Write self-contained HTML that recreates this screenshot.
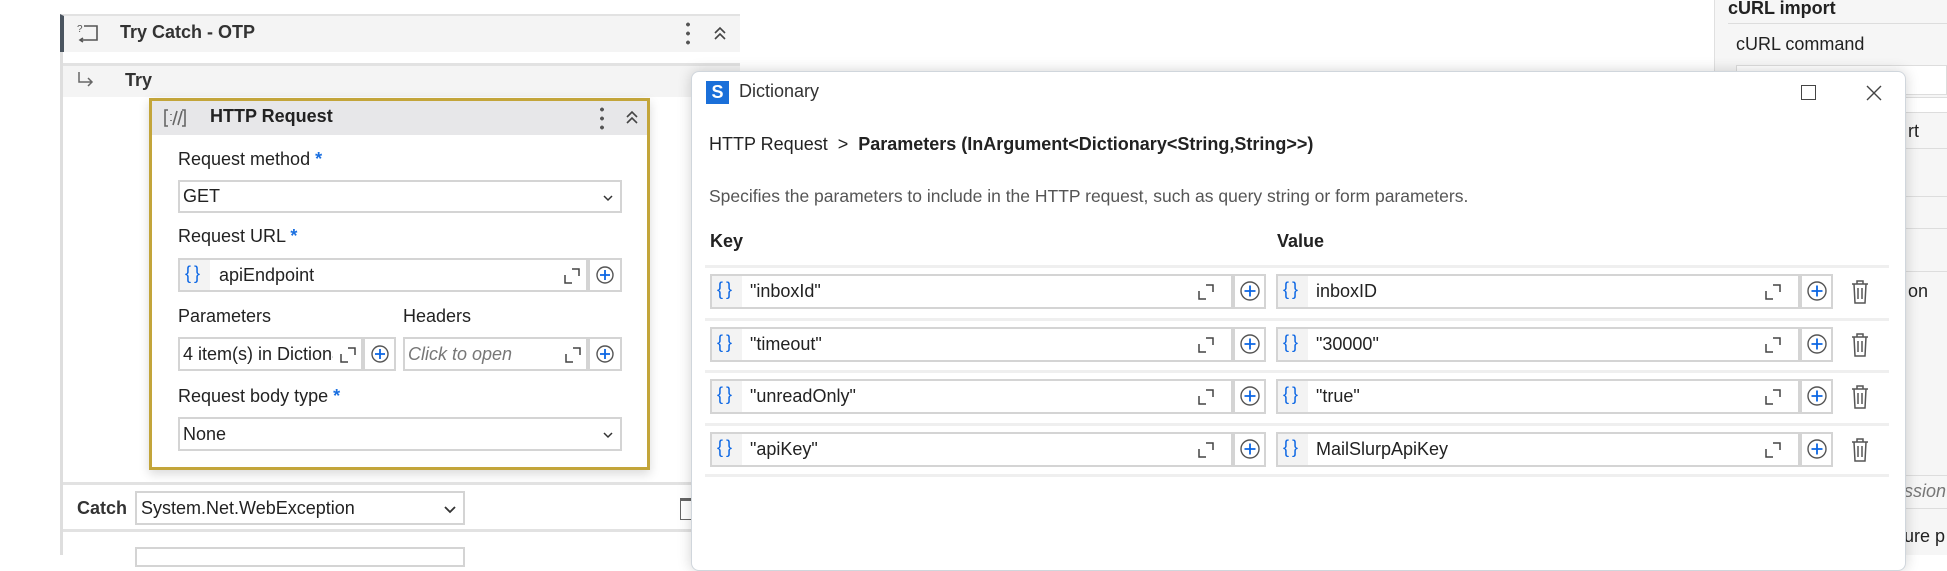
<!DOCTYPE html>
<html><head><meta charset="utf-8"><style>
*{box-sizing:border-box;margin:0;padding:0}
body{width:1947px;height:555px;overflow:hidden;background:#fff;font-family:"Liberation Sans",sans-serif;color:#222;position:relative;font-size:16px}
.a{position:absolute}
.inp{position:absolute;border:2px solid #d4d4d4;background:#fff}
.lbl{position:absolute;font-size:18px;color:#222}
.star{color:#1a6fe0;font-weight:bold}
.br{color:#0b66e4;font-size:18px;letter-spacing:3px}
.plus{position:absolute;border:2px solid #d4d4d4;background:#fff}
.dv{position:absolute;height:3px;background:#efefef}
</style></head><body>

<!-- left workflow panel -->
<div class="a" style="left:60px;top:14px;width:680px;height:541px;border-left:3px solid #dedede;background:#fff"></div>
<div class="a" style="left:60px;top:14px;width:680px;height:38px;background:#f4f4f4;border-left:4px solid #4b5560;border-top:2px solid #e2e2e2"></div>
<svg class="a" style="left:75px;top:22px" width="26" height="24" viewBox="0 0 26 24"><path d="M9 4h13v14H6" fill="none" stroke="#555" stroke-width="1.6"/><path d="M8 20l-3-2 3-2" fill="none" stroke="#555" stroke-width="1.6"/><text x="2" y="10" font-size="10" fill="#555" font-family="Liberation Sans">?</text></svg>
<div class="a" style="left:120px;top:22px;font-size:18px;font-weight:bold;color:#333">Try Catch - OTP</div>
<div class="a" style="left:686px;top:20px;width:4px;height:28px;background:radial-gradient(circle,#555 1.8px,transparent 2px) 0 0/4px 9px"></div>
<svg class="a" style="left:712px;top:24px" width="16" height="18"><path d="M3 9l5-5 5 5M3 15l5-5 5 5" fill="none" stroke="#444" stroke-width="1.6"/></svg>
<div class="a" style="left:63px;top:63px;width:677px;height:34px;background:#f4f4f4;border-top:3px solid #e2e2e2"></div>
<svg class="a" style="left:76px;top:70px" width="20" height="18"><path d="M3 2v10h13M12 8l4 4-4 4" fill="none" stroke="#666" stroke-width="1.5"/></svg>
<div class="a" style="left:125px;top:70px;font-size:18px;font-weight:bold;color:#333">Try</div>

<!-- HTTP card -->
<div class="a" style="left:149px;top:98px;width:501px;height:372px;border:3px solid #c3a53a;background:#fff;box-shadow:0 4px 10px rgba(0,0,0,.15)"></div>
<div class="a" style="left:152px;top:101px;width:495px;height:34px;background:#e7e7e9"></div>
<svg class="a" style="left:163px;top:108px" width="24" height="20"><path d="M5 2H2v16h3M19 2h3v16h-3" fill="none" stroke="#666" stroke-width="1.6"/><path d="M8 6v1M8 12v1M14 3l-4 14M19 3l-4 14" stroke="#666" stroke-width="1.6"/></svg>
<div class="a" style="left:210px;top:106px;font-size:18px;font-weight:bold;color:#222">HTTP Request</div>
<div class="a" style="left:600px;top:105px;width:4px;height:26px;background:radial-gradient(circle,#555 1.8px,transparent 2px) 0 0/4px 9px"></div>
<svg class="a" style="left:624px;top:108px" width="16" height="18"><path d="M3 9l5-5 5 5M3 15l5-5 5 5" fill="none" stroke="#444" stroke-width="1.6"/></svg>

<div class="lbl" style="left:178px;top:149px">Request method <span class="star">*</span></div>
<div class="inp" style="left:178px;top:180px;width:444px;height:33px"></div>
<div class="a" style="left:183px;top:186px;font-size:18px">GET</div>
<svg class="a" style="left:603px;top:194px" width="10" height="8"><path d="M1 2l4 4 4-4" fill="none" stroke="#333" stroke-width="1.5"/></svg>

<div class="lbl" style="left:178px;top:226px">Request URL <span class="star">*</span></div>
<div class="inp" style="left:178px;top:258px;width:410px;height:34px"></div>
<div class="a" style="left:180px;top:260px;width:30px;height:30px;background:#f3f3f3"></div>
<div class="a br" style="left:185px;top:263px">{}</div>
<div class="a" style="left:219px;top:265px;font-size:18px">apiEndpoint</div>
<svg class="a" style="left:564px;top:268px" width="16" height="16"><path d="M1 7v8h7M8 1h7v7" fill="none" stroke="#444" stroke-width="1.5"/></svg>
<div class="plus" style="left:588px;top:258px;width:34px;height:34px"></div>
<svg class="a" style="left:596px;top:266px" width="18" height="18"><circle cx="9" cy="9" r="8" fill="none" stroke="#555" stroke-width="1.4"/><path d="M9 4v10M4 9h10" stroke="#0b66e4" stroke-width="1.8"/></svg>

<div class="lbl" style="left:178px;top:306px">Parameters</div>
<div class="lbl" style="left:403px;top:306px">Headers</div>
<div class="inp" style="left:178px;top:337px;width:185px;height:34px"></div>
<div class="a" style="left:183px;top:344px;font-size:18px;width:150px;overflow:hidden;white-space:nowrap">4 item(s) in Dictionary</div>
<svg class="a" style="left:340px;top:347px" width="16" height="16"><path d="M1 7v8h7M8 1h7v7" fill="none" stroke="#444" stroke-width="1.5"/></svg>
<div class="plus" style="left:363px;top:337px;width:33px;height:34px"></div>
<svg class="a" style="left:371px;top:345px" width="18" height="18"><circle cx="9" cy="9" r="8" fill="none" stroke="#555" stroke-width="1.4"/><path d="M9 4v10M4 9h10" stroke="#0b66e4" stroke-width="1.8"/></svg>
<div class="inp" style="left:403px;top:337px;width:185px;height:34px"></div>
<div class="a" style="left:408px;top:344px;font-size:18px;font-style:italic;color:#777">Click to open</div>
<svg class="a" style="left:565px;top:347px" width="16" height="16"><path d="M1 7v8h7M8 1h7v7" fill="none" stroke="#444" stroke-width="1.5"/></svg>
<div class="plus" style="left:588px;top:337px;width:34px;height:34px"></div>
<svg class="a" style="left:596px;top:345px" width="18" height="18"><circle cx="9" cy="9" r="8" fill="none" stroke="#555" stroke-width="1.4"/><path d="M9 4v10M4 9h10" stroke="#0b66e4" stroke-width="1.8"/></svg>

<div class="lbl" style="left:178px;top:386px">Request body type <span class="star">*</span></div>
<div class="inp" style="left:178px;top:417px;width:444px;height:34px"></div>
<div class="a" style="left:183px;top:424px;font-size:18px">None</div>
<svg class="a" style="left:603px;top:431px" width="10" height="8"><path d="M1 2l4 4 4-4" fill="none" stroke="#333" stroke-width="1.5"/></svg>

<div class="a" style="left:63px;top:482px;width:677px;height:3px;background:#e2e2e2"></div>
<div class="a" style="left:77px;top:498px;font-size:18px;font-weight:bold;color:#333">Catch</div>
<div class="inp" style="left:135px;top:491px;width:330px;height:34px"></div>
<div class="a" style="left:141px;top:498px;font-size:18px">System.Net.WebException</div>
<svg class="a" style="left:444px;top:505px" width="12" height="9"><path d="M1 2l5 5 5-5" fill="none" stroke="#333" stroke-width="1.8"/></svg>
<div class="a" style="left:680px;top:498px;width:12px;height:22px;border:1.5px solid #666;border-top:3px solid #666"></div>
<div class="a" style="left:63px;top:529px;width:677px;height:3px;background:#e2e2e2"></div>
<div class="inp" style="left:135px;top:547px;width:330px;height:20px"></div>

<!-- right panel -->
<div class="a" style="left:1714px;top:0;width:233px;height:555px;background:#f6f6f6;border-left:1px solid #e0e0e0"></div>
<div class="a" style="left:1728px;top:-2px;font-size:18px;font-weight:bold;color:#222">cURL import</div>
<div class="a" style="left:1728px;top:23px;width:219px;height:1px;background:#ddd"></div>
<div class="a" style="left:1736px;top:34px;font-size:18px;color:#222">cURL command</div>
<div class="a" style="left:1736px;top:65px;width:211px;height:30px;border:1px solid #ddd;background:#fff"></div>
<div class="a" style="left:1906px;top:97px;width:41px;height:16px;background:#fff;border-top:1px solid #ddd;border-bottom:1px solid #ddd"></div>
<div class="a" style="left:1906px;top:148px;width:41px;height:1px;background:#ddd"></div>
<div class="a" style="left:1906px;top:196px;width:41px;height:1px;background:#ddd"></div>
<div class="a" style="left:1906px;top:228px;width:41px;height:1px;background:#ddd"></div>
<div class="a" style="left:1906px;top:271px;width:41px;height:1px;background:#ddd"></div>
<div class="a" style="left:1906px;top:475px;width:41px;height:1px;background:#ddd"></div>
<div class="a" style="left:1906px;top:508px;width:41px;height:1px;background:#ddd"></div>
<div class="a" style="left:1908px;top:121px;font-size:18px">rt</div>
<div class="a" style="left:1908px;top:281px;font-size:18px">on</div>
<div class="a" style="left:1904px;top:481px;font-size:18px;font-style:italic;color:#777">ssion</div>
<div class="a" style="left:1904px;top:526px;font-size:18px">ure p</div>

<!-- dialog -->
<div class="a" style="left:691px;top:71px;width:1215px;height:500px;background:#fff;border:1px solid #d0d6dc;border-radius:8px;box-shadow:0 0 14px rgba(0,0,0,.18)"></div>
<div class="a" style="left:706px;top:81px;width:23px;height:23px;background:#1a6fd9;color:#fff;font-size:18px;font-weight:bold;text-align:center;line-height:23px">S</div>
<div class="a" style="left:739px;top:81px;font-size:18px;color:#333">Dictionary</div>
<div class="a" style="left:1801px;top:85px;width:15px;height:15px;border:1.5px solid #444"></div>
<svg class="a" style="left:1865px;top:84px" width="18" height="18"><path d="M2 2L16 16M16 2L2 16" stroke="#444" stroke-width="1.4"/></svg>
<div class="a" style="left:709px;top:134px;font-size:18px;color:#222">HTTP Request &nbsp;&gt;&nbsp; <b>Parameters (InArgument&lt;Dictionary&lt;String,String&gt;&gt;)</b></div>
<div class="a" style="left:709px;top:186px;font-size:17.5px;color:#555">Specifies the parameters to include in the HTTP request, such as query string or form parameters.</div>
<div class="a" style="left:710px;top:231px;font-size:18px;font-weight:bold;color:#222">Key</div>
<div class="a" style="left:1277px;top:231px;font-size:18px;font-weight:bold;color:#222">Value</div>

<div id="rows"></div>
<script>
(function(){
var keys=['"inboxId"','"timeout"','"unreadOnly"','"apiKey"'];
var vals=['inboxID','"30000"','"true"','MailSlurpApiKey'];
var h='';
function field(x,w,t0,t){
  var s='<div class="inp" style="left:'+x+'px;top:'+t0+'px;width:'+w+'px;height:35px"></div>';
  s+='<div class="a" style="left:'+(x+2)+'px;top:'+(t0+2)+'px;width:30px;height:31px;background:#f3f3f3"></div>';
  s+='<div class="a br" style="left:'+(x+7)+'px;top:'+(t0+5)+'px">{}</div>';
  s+='<div class="a" style="left:'+(x+40)+'px;top:'+(t0+7)+'px;font-size:18px;color:#222">'+t+'</div>';
  var ex=x+w-35;
  s+='<svg class="a" style="left:'+ex+'px;top:'+(t0+10)+'px" width="16" height="16"><path d="M1 7v8h7M8 1h7v7" fill="none" stroke="#444" stroke-width="1.5"/></svg>';
  s+='<div class="plus" style="left:'+(x+w)+'px;top:'+t0+'px;width:33px;height:35px"></div>';
  s+='<svg class="a" style="left:'+(x+w+7)+'px;top:'+(t0+7)+'px" width="20" height="20"><circle cx="10" cy="10" r="9" fill="none" stroke="#555" stroke-width="1.4"/><path d="M10 4.5v11M4.5 10h11" stroke="#0b66e4" stroke-width="1.8"/></svg>';
  return s;
}
for(var i=0;i<4;i++){
  var t0=Math.round(274+i*52.5);
  h+='<div class="dv" style="left:705px;top:'+(t0-9)+'px;width:1184px"></div>';
  h+=field(710,523,t0,keys[i]);
  h+=field(1276,524,t0,vals[i]);
  h+='<svg class="a" style="left:1850px;top:'+(t0+5)+'px" width="20" height="26"><path d="M2 5h16M7 5V2h6v3M4 5l1 19h10l1-19M8 9v11M12 9v11" fill="none" stroke="#555" stroke-width="1.5"/></svg>';
}
h+='<div class="dv" style="left:705px;top:474px;width:1184px"></div>';
document.getElementById('rows').innerHTML=h;
})();
</script>
</body></html>
